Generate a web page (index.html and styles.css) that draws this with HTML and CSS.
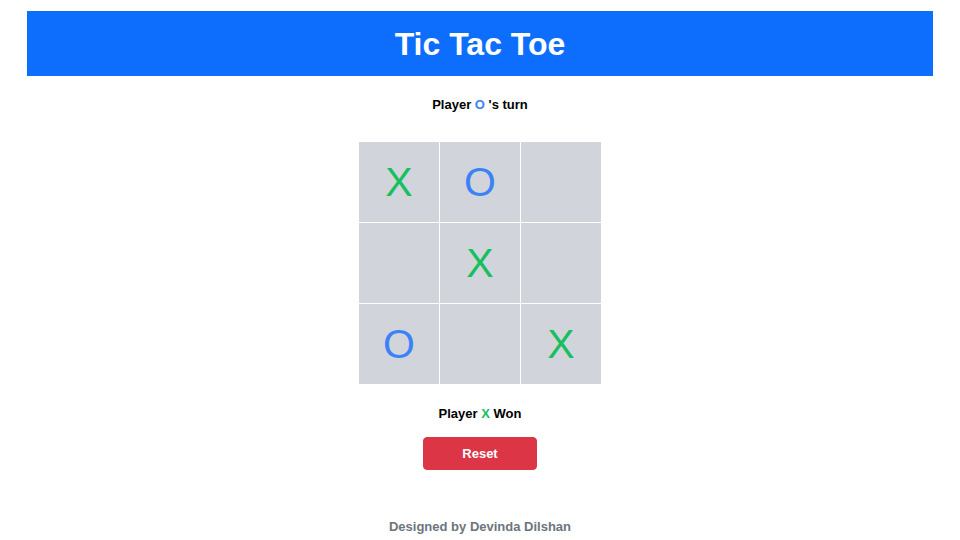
FILE: index.html
```html
<!DOCTYPE html>
<html lang="en">
<head>
<meta charset="utf-8">
<title>Tic Tac Toe</title>
<link rel="stylesheet" href="styles.css">
</head>
<body>
  <header class="banner">
    <h1 class="title">Tic Tac Toe</h1>
  </header>
  <main class="game">
    <p class="status">Player <span class="mark-o">O</span> 's turn</p>
    <div class="board">
      <div class="cell x">X</div>
      <div class="cell o">O</div>
      <div class="cell"></div>
      <div class="cell"></div>
      <div class="cell x">X</div>
      <div class="cell"></div>
      <div class="cell o">O</div>
      <div class="cell"></div>
      <div class="cell x">X</div>
    </div>
    <p class="result">Player <span class="mark-x">X</span> Won</p>
    <button class="reset" type="button">Reset</button>
  </main>
  <footer class="credit">Designed by Devinda Dilshan</footer>
</body>
</html>
```

FILE: styles.css
```css
* { box-sizing: border-box; }
html, body { margin: 0; padding: 0; }
body {
  font-family: "Liberation Sans", Arial, sans-serif;
  color: #000;
  background: #fff;
  padding: 11px 27px 0;
  width: 960px;
  height: 540px;
  display: flex;
  flex-direction: column;
  align-items: stretch;
}
.banner {
  background: #0d6efd;
  height: 65px;
  display: flex;
  align-items: center;
  justify-content: center;
}
.title {
  margin: 0;
  color: #fff;
  font-size: 32px;
  font-weight: 700;
  line-height: 1;
}
.game {
  display: flex;
  flex-direction: column;
  align-items: center;
}
.status {
  margin: 21px 0 0;
  font-size: 13px;
  font-weight: 700;
  line-height: 15px;
}
.mark-o { color: #3b82f6; }
.mark-x { color: #16c05e; }
.board {
  margin-top: 30px;
  display: grid;
  grid-template-columns: repeat(3, 80px);
  grid-template-rows: repeat(3, 80px);
  gap: 1px;
  width: 242px;
}
.cell {
  background: #d1d5db;
  display: flex;
  align-items: center;
  justify-content: center;
  font-size: 41px;
  line-height: 1;
  font-family: "Liberation Sans", Arial, sans-serif;
}
.cell.x { color: #16c05e; }
.cell.o { color: #3b82f6; }
.result {
  margin: 22px 0 0;
  font-size: 13px;
  font-weight: 700;
  line-height: 15px;
}
.reset {
  margin-top: 16px;
  width: 114px;
  height: 33px;
  background: #dc3545;
  border: 1px solid #dc3545;
  border-radius: 4px;
  color: #fff;
  font-family: "Liberation Sans", Arial, sans-serif;
  font-size: 13px;
  font-weight: 700;
  padding: 0;
}
.credit {
  margin-top: 49px;
  text-align: center;
  color: #6c757d;
  font-size: 13px;
  font-weight: 700;
}
```
